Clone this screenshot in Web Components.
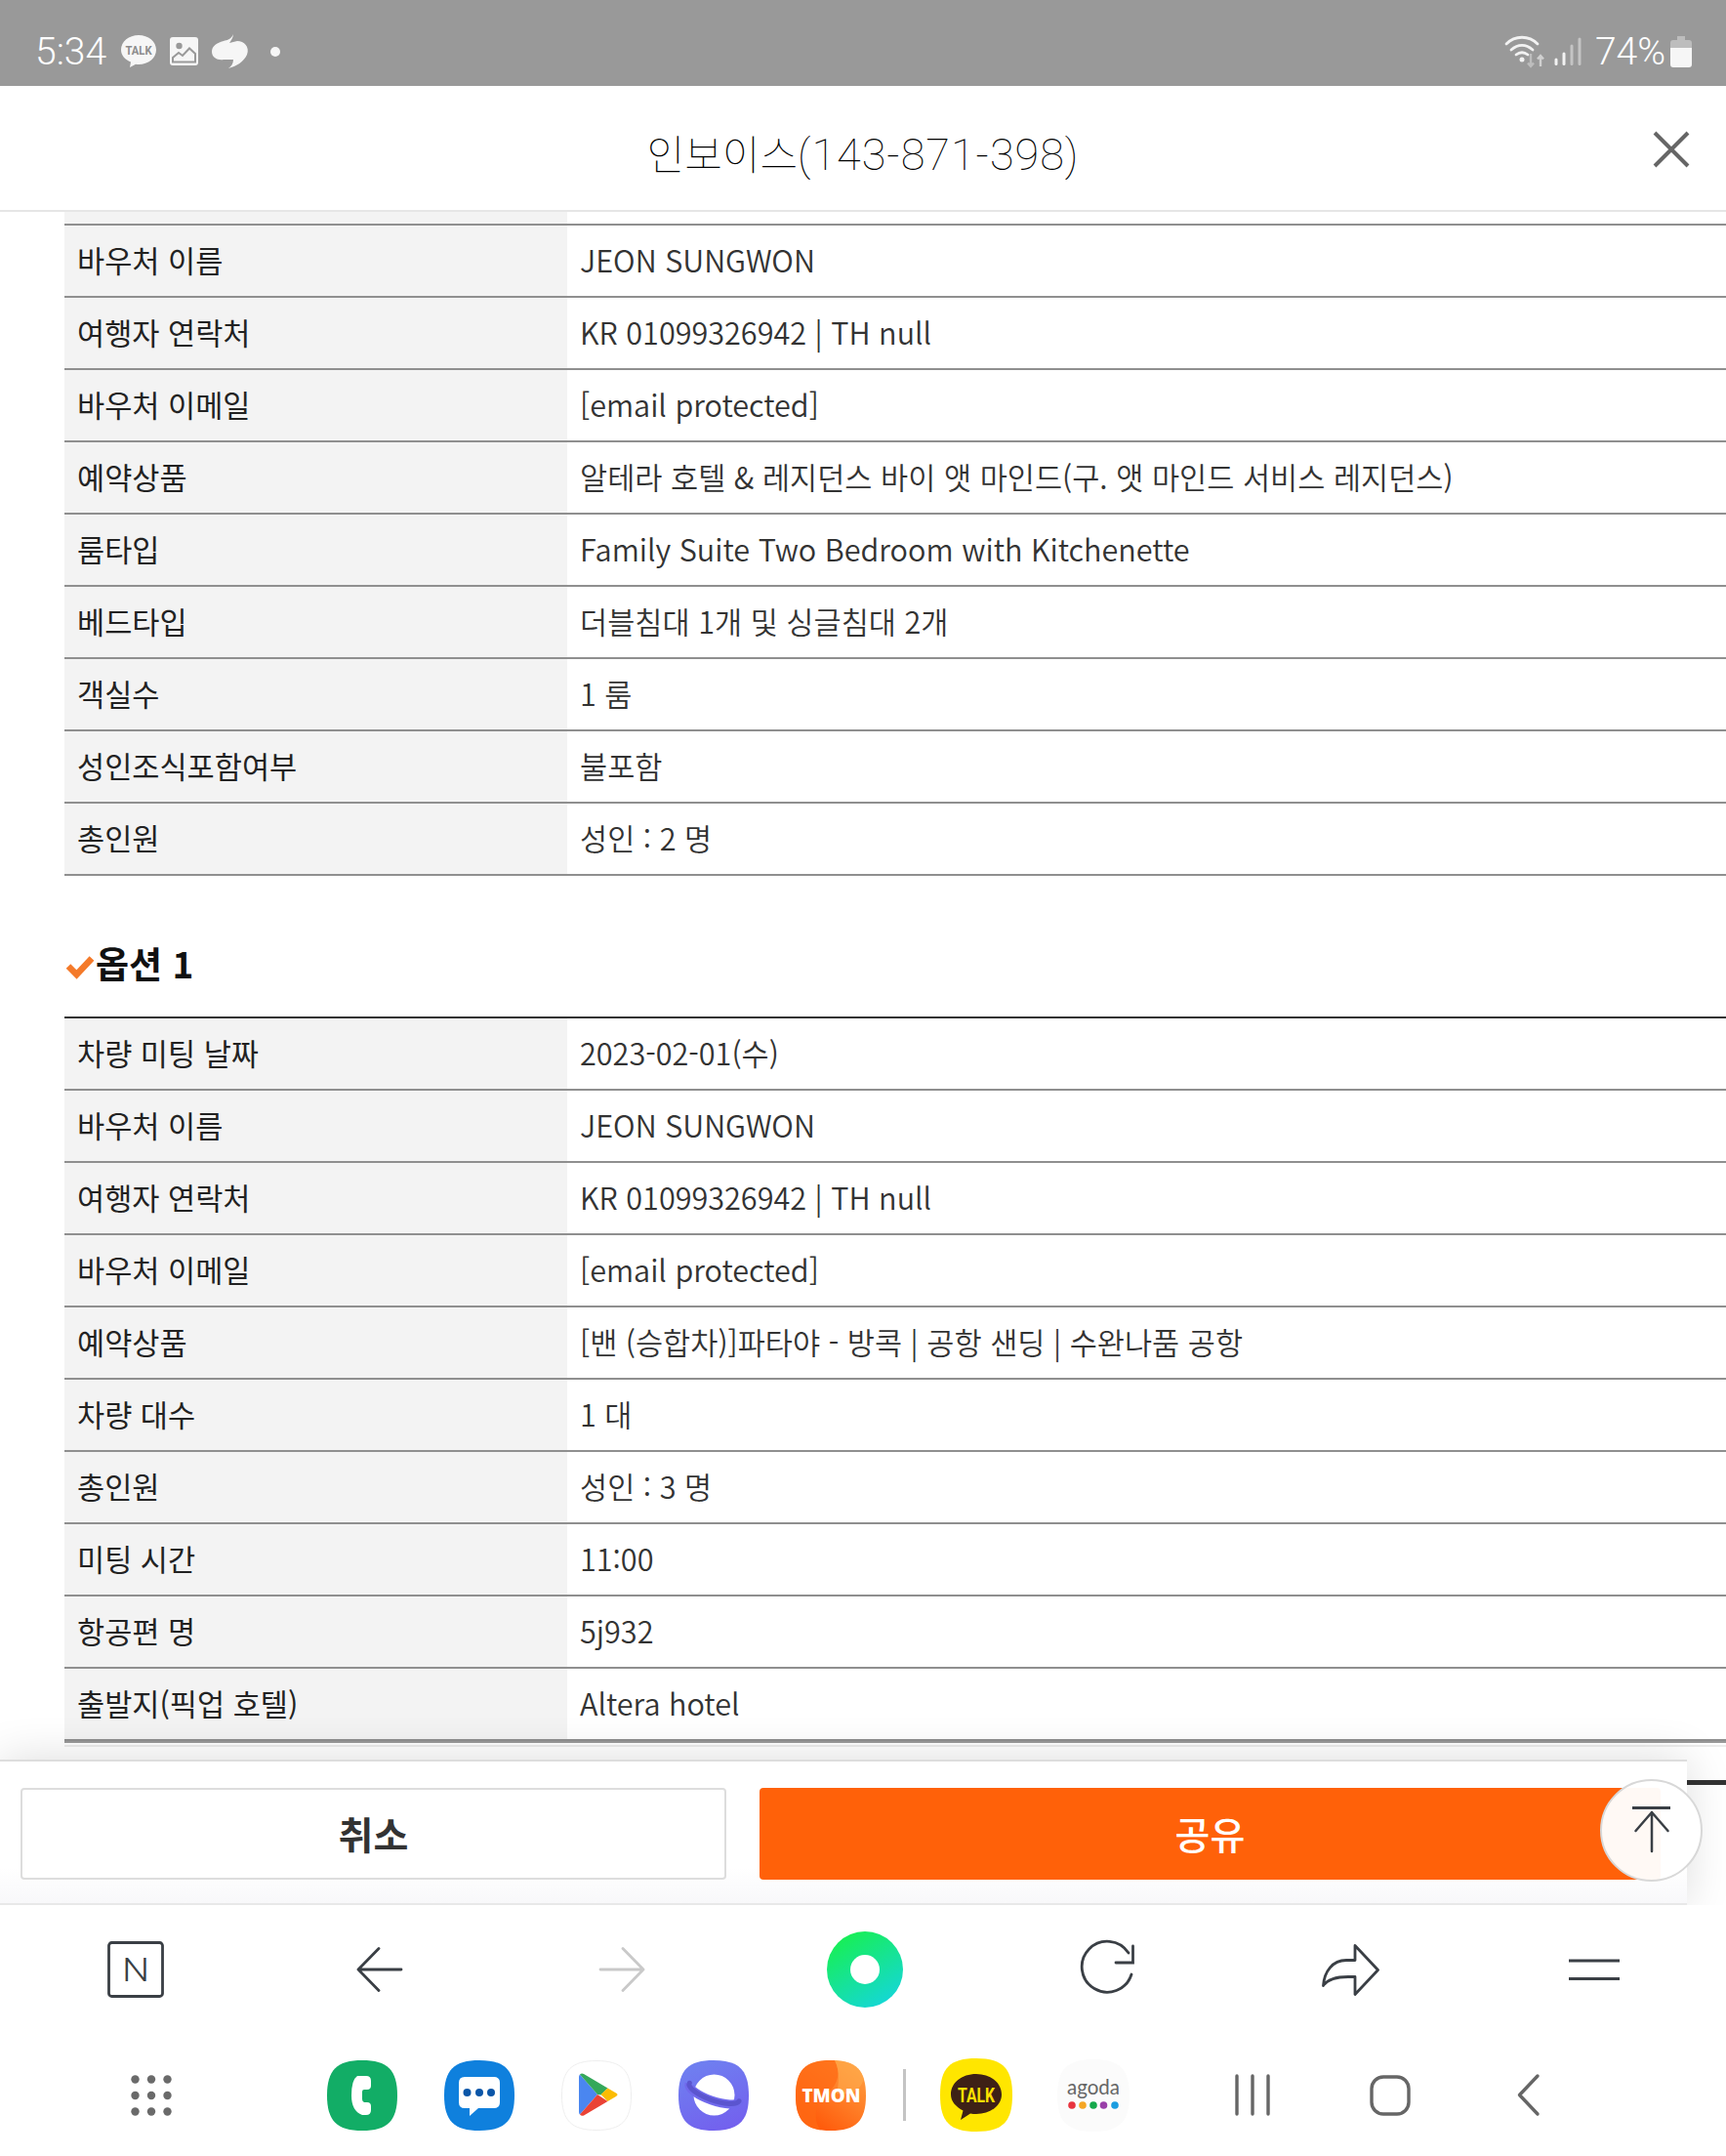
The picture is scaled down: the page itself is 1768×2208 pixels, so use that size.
<!DOCTYPE html>
<html lang="ko">
<head>
<meta charset="utf-8">
<title>인보이스</title>
<style>
  html, body { margin: 0; padding: 0; background: #fff; }
  body { font-family: "Noto Sans CJK KR", "Noto Sans", sans-serif; }
</style>
</head>
<body>
<phone-page>
  <status-bar slot="status"></status-bar>
  <invoice-header slot="header" title="인보이스" number="(143-871-398)"></invoice-header>

  <info-table partial>
    <info-row label="바우처 이름">JEON SUNGWON</info-row>
    <info-row label="여행자 연락처">KR 01099326942 | TH null</info-row>
    <info-row label="바우처 이메일">[email protected]</info-row>
    <info-row label="예약상품">알테라 호텔 &amp; 레지던스 바이 앳 마인드(구. 앳 마인드 서비스 레지던스)</info-row>
    <info-row label="룸타입">Family Suite Two Bedroom with Kitchenette</info-row>
    <info-row label="베드타입">더블침대 1개 및 싱글침대 2개</info-row>
    <info-row label="객실수">1 룸</info-row>
    <info-row label="성인조식포함여부">불포함</info-row>
    <info-row label="총인원">성인 : 2 명</info-row>
  </info-table>

  <section-title>옵션 1</section-title>

  <info-table strong>
    <info-row label="차량 미팅 날짜">2023-02-01(수)</info-row>
    <info-row label="바우처 이름">JEON SUNGWON</info-row>
    <info-row label="여행자 연락처">KR 01099326942 | TH null</info-row>
    <info-row label="바우처 이메일">[email protected]</info-row>
    <info-row label="예약상품">[밴 (승합차)]파타야 - 방콕 | 공항 샌딩 | 수완나품 공항</info-row>
    <info-row label="차량 대수">1 대</info-row>
    <info-row label="총인원">성인 : 3 명</info-row>
    <info-row label="미팅 시간">11:00</info-row>
    <info-row label="항공편 명">5j932</info-row>
    <info-row label="출발지(픽업 호텔)">Altera hotel</info-row>
  </info-table>
  <table-tail></table-tail>

  <action-bar slot="overlay"></action-bar>

  <browser-toolbar slot="toolbar"></browser-toolbar>
  <app-dock slot="dock"></app-dock>
</phone-page>

<script>
const SQUIRCLE = 'M36 0C62 0 72 10 72 36S62 72 36 72 0 62 0 36 10 0 36 0Z';
const DARK = '#3a3f45';

const ICONS = {
  talkStatus: [36, 33, `<path d="M18 0C28 0 36 6.500 36 15S28 30 18 30c-1 0-2 0-3-.2L9 33l1-5.500C4 25 0 20.500 0 15 0 6.500 8 0 18 0Z" fill="#f6f6f6"/>
    <text x="18" y="20" text-anchor="middle" font-family="Roboto" font-size="13" font-weight="700" fill="#8c8c8c" textLength="27" lengthAdjust="spacingAndGlyphs">TALK</text>`],
  picture: [29, 29, `<rect width="29" height="29" rx="3" fill="#f6f6f6"/><circle cx="9.500" cy="9" r="3.200" fill="#999"/>
    <path d="M3 25.500V21L9 16 13 19 20 11.500 26 17V25.500Z" fill="none" stroke="#999" stroke-width="2"/>`],
  hook: [38, 36, `<path d="M22 0C20 5 16 6 12 7 5 9 0 12 0 18 0 24 6 27 12 26H22C22 30 20 33 17 35 25 33 33 28 36 21 39 13 33 7 26 7L18 9C20 6 22 3 22 0Z" fill="#f6f6f6"/>`],
  wifi: [42, 32, `<g fill="none" stroke="#f2f2f2" stroke-width="2.800" stroke-linecap="round">
      <path d="M2 8C11 -1 25 -1 34 8"/><path d="M7 14C14 8 22 8 29 14"/><path d="M12 19C16 16 20 16 24 19"/></g>
    <circle cx="18" cy="24" r="2.500" fill="#f2f2f2"/>
    <path d="M27 18V31M24 27.500L27 31 30 27.500" fill="none" stroke="#bdbdbd" stroke-width="2.400"/>
    <path d="M37 31V20M34 23.500L37 20 40 23.500" fill="none" stroke="#d0d0d0" stroke-width="2.400"/>`],
  signal: [28, 29, `<g fill="none" stroke-width="3" stroke-linecap="round">
      <path d="M2 27.500V23" stroke="#f2f2f2"/><path d="M10 27.500V17" stroke="#f2f2f2"/>
      <path d="M18 27.500V9" stroke="#c4c4c4"/><path d="M26 27.500V2" stroke="#c4c4c4"/></g>`],
  battery: [22, 32, `<path d="M7 0H15V4H19Q22 4 22 7V12H0V7Q0 4 3 4H7Z" fill="#bdbdbd"/>
    <path d="M0 12H22V29Q22 32 19 32H3Q0 32 0 29Z" fill="#f6f6f6"/>`],
  close: [38, 36, `<path d="M2 1L36 35M36 1L2 35" fill="none" stroke="#666" stroke-width="4"/>`],
  check: [28, 22, `<path d="M2 10.500L10.500 19 26 2.500" fill="none" stroke="#f47a2a" stroke-width="6.500"/>`],
  top: [40, 46, `<path d="M0 1.500H39" stroke="#3a3f45" stroke-width="3"/>
    <path d="M20 6V46M3.500 25L20 6 36.500 25" fill="none" stroke="${DARK}" stroke-width="2.500" stroke-linecap="round" stroke-linejoin="round"/>`],

  // browser toolbar
  news: [58, 58, `<rect x="1.500" y="1.500" width="55" height="55" rx="3" fill="#fff" stroke="${DARK}" stroke-width="2.800"/>
    <text transform="translate(29 40.500) scale(1.2 1)" text-anchor="middle" font-family="Roboto" font-weight="300" font-size="33" fill="${DARK}">N</text>`],
  back: [47, 46, `<path d="M46 23H2M23 1.500L2 23 23 44.500" fill="none" stroke="${DARK}" stroke-width="2.800" stroke-linecap="round" stroke-linejoin="round"/>`],
  forward: [47, 46, `<path d="M1 23H45M24 1.500L45 23 24 44.500" fill="none" stroke="#c9c9c9" stroke-width="2.800" stroke-linecap="round" stroke-linejoin="round"/>`],
  home: [78, 78, `<defs><linearGradient id="h" x1="0.200" y1="0" x2="0.800" y2="1"><stop offset="0" stop-color="#18f04e"/><stop offset="1" stop-color="#14d6dc"/></linearGradient></defs>
    <circle cx="39" cy="39" r="39" fill="url(#h)"/><circle cx="39" cy="39" r="15" fill="#fff"/>`],
  reload: [56, 54, `<path d="M52 32A26 26 0 1 1 49 10" fill="none" stroke="${DARK}" stroke-width="2.800" stroke-linecap="round"/>
    <path d="M53.500 3V20H36" fill="none" stroke="${DARK}" stroke-width="2.800" stroke-linecap="round"/>`],
  share: [59, 53, `<path d="M34 1.500L57.500 26.500 34 51.500V33.500H27C15 33.500 6 36 1.500 42.500 2.500 28 11 16.500 25 16.500H34Z" fill="none" stroke="${DARK}" stroke-width="2.800" stroke-linejoin="round"/>`],
  menu: [52, 22, `<path d="M0 2H52M0 20.500H52" stroke="${DARK}" stroke-width="3"/>`],

  // dock
  dots: [42, 42, `<g fill="#6a6a6a">
    <circle cx="4.500" cy="4.500" r="4.200"/><circle cx="21" cy="4.500" r="4.200"/><circle cx="37.500" cy="4.500" r="4.200"/>
    <circle cx="4.500" cy="21" r="4.200"/><circle cx="21" cy="21" r="4.200"/><circle cx="37.500" cy="21" r="4.200"/>
    <circle cx="4.500" cy="37.500" r="4.200"/><circle cx="21" cy="37.500" r="4.200"/><circle cx="37.500" cy="37.500" r="4.200"/></g>`],
  phone: [72, 72, `<path d="${SQUIRCLE}" fill="#12ad66"/>
    <path d="M31 16H40Q45 16 45 21V26Q45 30 41 30H38Q36 30 36 32V40Q36 42 38 43H41Q45 43 45 47V51Q45 56 40 56H36Q25 52 25 36 25 20 31 16Z" fill="#fff"/>`],
  messages: [72, 72, `<path d="${SQUIRCLE}" fill="#0f80dd"/>
    <path d="M21 17H51Q57 17 57 23V43Q57 49 51 49H35L26 57V49H21Q15 49 15 43V23Q15 17 21 17Z" fill="#fff"/>
    <circle cx="23.500" cy="33" r="4" fill="#0a56a8"/><circle cx="36" cy="33" r="4" fill="#0a56a8"/><circle cx="48" cy="33" r="4" fill="#0a56a8"/>`],
  play: [72, 72, `<path d="${SQUIRCLE}" fill="#fff" stroke="#eee" stroke-width="1" transform="translate(.5 .5) scale(.986)"/>
    <path d="M19 14.500L37 35 19 55.500Q18 54.500 18 53V17Q18 15.500 19 14.500Z" fill="#4a86f0"/>
    <path d="M19 14.500Q20.500 13 23 14L47.500 28.500 40.500 35.500 37 35Z" fill="#34a85a"/>
    <path d="M47.500 28.500L56 33.500Q59 35 56 37L47.500 42 40.500 35Z" fill="#fbbc04"/>
    <path d="M19 55.500L37 35 47.500 42 23 56.500Q20.500 57.500 19 55.500Z" fill="#ea4335"/>`],
  internet: [72, 72, `<defs><linearGradient id="i" x1="0.300" y1="0" x2="0.700" y2="1"><stop offset="0" stop-color="#6f80f0"/><stop offset="1" stop-color="#7360ee"/></linearGradient></defs>
    <path d="${SQUIRCLE}" fill="url(#i)"/><circle cx="36.500" cy="35.500" r="21" fill="#fff"/>
    <path d="M-27 0A27 8.500 0 0 0 27 0" transform="translate(36.500 33) rotate(19)" fill="none" stroke="#7069ec" stroke-width="9"/>
    <path d="M-27 -1A27 8.500 0 0 0 27 0" transform="translate(36.500 33) rotate(19)" fill="none" stroke="#5b55cf" stroke-width="5" stroke-linecap="round"/>`],
  tmon: [73, 72, `<defs><linearGradient id="t" x1="0.900" y1="0.100" x2="0.300" y2="0.900"><stop offset="0" stop-color="#ff9d3f"/><stop offset="1" stop-color="#ff5c0c"/></linearGradient><clipPath id="tc"><path d="${SQUIRCLE}"/></clipPath></defs>
    <path d="${SQUIRCLE}" fill="url(#t)"/>
    <g clip-path="url(#tc)"><path d="M40 0C46 12 44 24 34 32 18 44 18 62 26 72H0V0Z" fill="#ff6a14" opacity=".75"/><path d="M40 0C46 12 44 24 42 34 68 38 72 20 72 0Z" fill="#ffab4d" opacity=".6"/></g>
    <text x="36.500" y="43" text-anchor="middle" font-family="Open Sans" font-weight="800" font-size="19" fill="#fff" textLength="60" lengthAdjust="spacingAndGlyphs">TMON</text>`],
  kakao: [74, 75, `<path d="M37 0C64 0 74 10 74 37.500S64 75 37 75 0 65 0 37.500 10 0 37 0Z" fill="#ffe600"/>
    <path d="M37 16C52 16 63 25 63 37 63 48 52 57 37 57 35 57 33 57 31 56.500L21 63 23.500 53.500C16 49.500 11 44 11 37 11 25 22 16 37 16Z" fill="#3e2116"/>
    <text x="37" y="45" text-anchor="middle" font-family="Roboto" font-weight="700" font-size="21" fill="#ffe100" textLength="38" lengthAdjust="spacingAndGlyphs">TALK</text>`],
  agoda: [74, 74, `<path d="${SQUIRCLE}" transform="scale(1.028)" fill="#fbfbfb"/>
    <text x="37" y="36" text-anchor="middle" font-family="Lato" font-weight="400" font-size="21" fill="#666" textLength="54" lengthAdjust="spacingAndGlyphs">agoda</text>
    <circle cx="15" cy="47" r="3.800" fill="#e8343f"/><circle cx="26" cy="47" r="3.800" fill="#f5a623"/><circle cx="37" cy="47" r="3.800" fill="#14a84b"/><circle cx="47.500" cy="47" r="3.800" fill="#993fa8"/><circle cx="59" cy="47" r="3.800" fill="#1a9de0"/>`],
  recents: [38, 41, `<path d="M3 1V40M19 1V40M35 1V40" fill="none" stroke="#666" stroke-width="3.400" stroke-linecap="round"/>`],
  square: [42, 42, `<rect x="2" y="2" width="38" height="38" rx="12" fill="none" stroke="#666" stroke-width="3.400"/>`],
  navBack: [23, 43, `<path d="M21 2L2.500 21.500 21 41" fill="none" stroke="#666" stroke-width="3.400" stroke-linecap="round" stroke-linejoin="round"/>`]
};

class UiIcon extends HTMLElement {
  constructor() {
    super();
    this.attachShadow({mode: 'open'});
  }

  connectedCallback() {
    const [w, h, body] = ICONS[this.getAttribute('name')];
    this.shadowRoot.innerHTML = `
      <style>
        :host { display: block; flex: none; width: ${w}px; height: ${h}px; }
        svg { display: block; overflow: visible; }
      </style>
      <svg width="${w}" height="${h}" viewBox="0 0 ${w} ${h}">${body}</svg>
    `;
  }
}
customElements.define('ui-icon', UiIcon);

class PhonePage extends HTMLElement {
  constructor() {
    super();
    this.attachShadow({mode: 'open'}).innerHTML = `
      <style>
        :host { display: flex; flex-direction: column; width: 1768px; height: 2208px; overflow: hidden; background: #fff; }
        .content { position: relative; flex: none; height: 1734px; overflow: hidden; }
        .bottom { flex: none; background: #fff; }
      </style>
      <slot name="status"></slot>
      <slot name="header"></slot>
      <div class="content">
        <slot></slot>
        <slot name="overlay"></slot>
      </div>
      <div class="bottom">
        <slot name="toolbar"></slot>
        <slot name="dock"></slot>
      </div>
    `;
  }
}
customElements.define('phone-page', PhonePage);

class StatusBar extends HTMLElement {
  constructor() {
    super();
    this.attachShadow({mode: 'open'}).innerHTML = `
      <style>
        :host { display: flex; align-items: center; height: 88px; padding: 0 35px 0 36px; box-sizing: border-box; background: #999; color: #fff; font: 300 39px Roboto, sans-serif; }
        .left, .right { display: flex; align-items: center; }
        .left { gap: 14px; padding-top: 17px; }
        .right { margin-left: auto; padding-top: 17px; }
        .time { margin-right: 1px; line-height: 40px; }
        .dot { width: 10px; height: 10px; margin-left: 8px; border-radius: 50%; background: #f6f6f6; }
        .pct { margin: 0 5px 0 14px; line-height: 40px; }
        ui-icon[name=signal] { margin-left: 9px; }
      </style>
      <div class="left">
        <span class="time">5:34</span>
        <ui-icon name="talkStatus"></ui-icon>
        <ui-icon name="picture"></ui-icon>
        <ui-icon name="hook"></ui-icon>
        <span class="dot"></span>
      </div>
      <div class="right">
        <ui-icon name="wifi"></ui-icon>
        <ui-icon name="signal"></ui-icon>
        <span class="pct">74%</span>
        <ui-icon name="battery"></ui-icon>
      </div>
    `;
  }
}
customElements.define('status-bar', StatusBar);

class InvoiceHeader extends HTMLElement {
  constructor() {
    super();
    this.attachShadow({mode: 'open'}).innerHTML = `
      <style>
        :host { display: flex; align-items: center; justify-content: center; position: relative; height: 129px; box-sizing: border-box; border-bottom: 2px solid #e6e6e6; background: #fff; }
        .title { padding-top: 7px; font: 100 42px "Noto Sans CJK KR", sans-serif; color: #000; white-space: nowrap; }
        .num { font: 100 45px Roboto, sans-serif; color: #000; letter-spacing: 1px; }
        ui-icon { position: absolute; right: 37px; top: 47px; }
      </style>
      <div class="title"><span class="name"></span><span class="num"></span></div>
      <ui-icon name="close"></ui-icon>
    `;
  }

  connectedCallback() {
    this.shadowRoot.querySelector('.name').textContent = this.getAttribute('title');
    this.shadowRoot.querySelector('.num').textContent = this.getAttribute('number');
  }
}
customElements.define('invoice-header', InvoiceHeader);

class InfoRow extends HTMLElement {
  constructor() {
    super();
    this.attachShadow({mode: 'open'}).innerHTML = `
      <style>
        :host { display: grid; grid-template-columns: 515px 1fr; height: 74px; box-sizing: border-box; border-bottom: 2px solid #8f8f8f; }
        .th, .td { display: flex; align-items: center; padding: 0 0 2px 13px; white-space: nowrap; font-size: 30.600px; }
        .th { background: #f3f3f3; color: #222; }
        .td { color: #333; font-weight: 350; }
      </style>
      <div class="th"></div>
      <div class="td"><slot></slot></div>
    `;
  }

  connectedCallback() {
    this.shadowRoot.querySelector('.th').textContent = this.getAttribute('label');
  }
}
customElements.define('info-row', InfoRow);

class InfoTable extends HTMLElement {
  constructor() {
    super();
    this.attachShadow({mode: 'open'}).innerHTML = `
      <style>
        :host { display: block; margin-left: 66px; }
        /* the row cut off by the header when scrolled */
        :host([partial]) .cut { height: 12px; border-bottom: 2px solid #8f8f8f; background: linear-gradient(90deg, #f3f3f3 515px, #fff 515px); }
        :host([strong]) .cut { height: 0; border-bottom: 2px solid #333; }
      </style>
      <div class="cut"></div>
      <slot></slot>
    `;
  }
}
customElements.define('info-table', InfoTable);

class SectionTitle extends HTMLElement {
  constructor() {
    super();
    this.attachShadow({mode: 'open'}).innerHTML = `
      <style>
        :host { display: flex; align-items: center; height: 144px; padding: 34px 0 0 68px; box-sizing: border-box; font-size: 37px; font-weight: 700; color: #111; }
        ui-icon { margin-top: 8px; margin-right: 2px; }
      </style>
      <ui-icon name="check"></ui-icon>
      <slot></slot>
    `;
  }
}
customElements.define('section-title', SectionTitle);

class TableTail extends HTMLElement {
  constructor() {
    super();
    this.attachShadow({mode: 'open'}).innerHTML = `
      <style>
        :host { display: block; margin-left: 66px; }
        .thick { height: 2px; background: #999; }
        .pale { height: 2px; margin-top: 2px; background: #ececec; }
        .next { height: 5px; margin-top: 34px; background: #333; }
      </style>
      <div class="thick"></div>
      <div class="pale"></div>
      <div class="next"></div>
    `;
  }
}
customElements.define('table-tail', TableTail);

class ActionBar extends HTMLElement {
  constructor() {
    super();
    this.attachShadow({mode: 'open'}).innerHTML = `
      <style>
        :host { display: flex; gap: 34px; position: absolute; left: 0; right: 40px; bottom: 0; height: 149px; padding: 27px 27px 0 21px; box-sizing: border-box; border-top: 2px solid #ddd; border-bottom: 2px solid #e8e8e8; background: linear-gradient(#fff 75%, #f8f8fa); box-shadow: 0 0 44px rgba(0,0,0,.14); }
        .btn { display: flex; align-items: center; justify-content: center; height: 94px; padding-bottom: 2px; box-sizing: border-box; border-radius: 4px; font: 500 39px "Noto Sans CJK KR", sans-serif; }
        .cancel { flex: 0 0 723px; border: 2px solid #ddd; background: #fff; color: #333; font-weight: 700; }
        .share { flex: 1; background: #ff6109; color: #fff; }
        .top { display: flex; align-items: center; justify-content: center; position: absolute; left: 1639px; top: 18px; width: 105px; height: 105px; box-sizing: border-box; border: 2px solid #d8d8d8; border-radius: 50%; background: rgba(255,255,255,.96); }
        .top ui-icon { margin-top: -4px; }
      </style>
      <div class="btn cancel">취소</div>
      <div class="btn share">공유</div>
      <div class="top"><ui-icon name="top"></ui-icon></div>
    `;
  }
}
customElements.define('action-bar', ActionBar);

class BrowserToolbar extends HTMLElement {
  constructor() {
    super();
    this.attachShadow({mode: 'open'}).innerHTML = `
      <style>
        :host { display: grid; grid-template-columns: repeat(7, 1fr); align-items: center; justify-items: center; height: 132px; padding: 0 11px 0 15px; }
      </style>
      <ui-icon name="news"></ui-icon>
      <ui-icon name="back"></ui-icon>
      <ui-icon name="forward"></ui-icon>
      <ui-icon name="home"></ui-icon>
      <ui-icon name="reload"></ui-icon>
      <ui-icon name="share"></ui-icon>
      <ui-icon name="menu"></ui-icon>
    `;
  }
}
customElements.define('browser-toolbar', BrowserToolbar);

class AppDock extends HTMLElement {
  constructor() {
    super();
    this.attachShadow({mode: 'open'}).innerHTML = `
      <style>
        :host { display: flex; align-items: center; height: 125px; padding-left: 134px; }
        .apps { display: flex; align-items: center; gap: 48px; margin-left: 159px; }
        .sep { width: 3px; height: 53px; margin: 0 -13px 0 -11px; background: #c4c4c4; }
        .nav { display: flex; align-items: center; margin-left: 107px; }
        ui-icon[name=square] { margin: 0 109px 0 101px; }
        ui-icon[name=kakao] + ui-icon { margin-left: -2px; }
      </style>
      <ui-icon name="dots"></ui-icon>
      <div class="apps">
        <ui-icon name="phone"></ui-icon>
        <ui-icon name="messages"></ui-icon>
        <ui-icon name="play"></ui-icon>
        <ui-icon name="internet"></ui-icon>
        <ui-icon name="tmon"></ui-icon>
        <span class="sep"></span>
        <ui-icon name="kakao"></ui-icon>
        <ui-icon name="agoda"></ui-icon>
      </div>
      <div class="nav">
        <ui-icon name="recents"></ui-icon>
        <ui-icon name="square"></ui-icon>
        <ui-icon name="navBack"></ui-icon>
      </div>
    `;
  }
}
customElements.define('app-dock', AppDock);
</script>
</body>
</html>
